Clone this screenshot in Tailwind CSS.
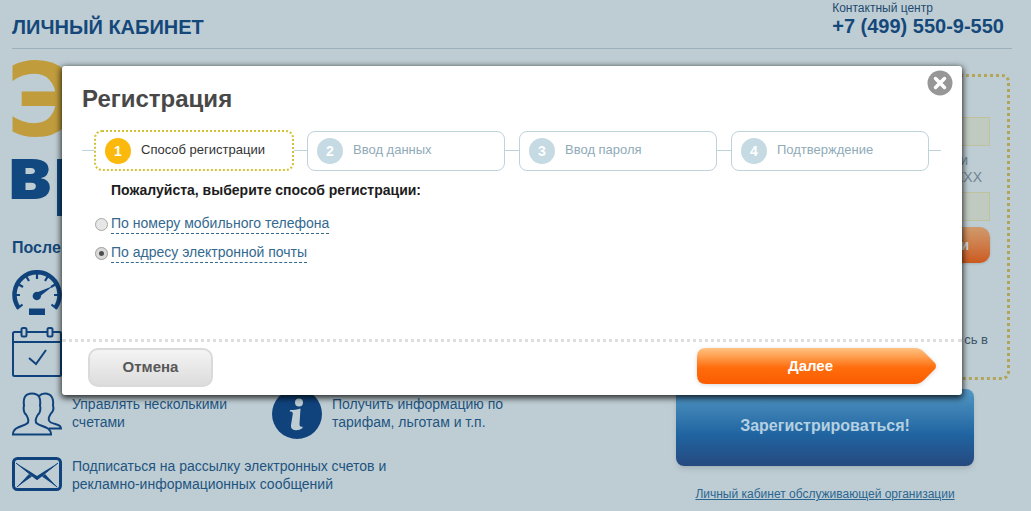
<!DOCTYPE html>
<html lang="ru">
<head>
<meta charset="utf-8">
<meta name="viewport" content="width=device-width, initial-scale=1">
<title>Личный кабинет — Регистрация</title>
<script src="https://cdn.jsdelivr.net/npm/@tailwindcss/browser@4"></script>
</head>
<body class="relative min-h-screen overflow-hidden bg-[#becdd4] font-['Liberation_Sans',Arial,sans-serif] text-sm text-[#1f5480]">

<div class="pl-3 pr-[19px]">
  <header class="flex h-12 items-start justify-between border-b border-[#9bb0bc] box-content">
    <h1 class="pt-[15px] text-xl leading-6 font-bold text-[#15487a]">ЛИЧНЫЙ КАБИНЕТ</h1>
    <div class="pr-2">
      <p class="text-xs leading-4 text-[#1f4a70]">Контактный центр</p>
      <p class="text-xl leading-5 font-bold text-[#15487a]">+7 (499) 550-9-550</p>
    </div>
  </header>

  <div class="flex justify-between">
    <main class="w-[520px]">
      <p class="-ml-[6px] h-[90px] pt-[10px] font-['DejaVu_Sans',sans-serif] text-[102px] leading-[84px] font-bold text-[#c09c3c]">Э</p>
      <p class="-ml-[5px] h-[99px] font-['Open_Sans',sans-serif] text-[72px] leading-[64px] font-extrabold text-[#10487f]">вр</p>
      <h2 class="text-base leading-5 font-bold text-[#15487a]">После</h2>

      <ul class="mt-3 grid grid-cols-2 gap-x-0">
        <li class="col-span-2 h-[57px]">
          <svg class="h-[46px] w-[50px]" viewBox="0 0 50 46" fill="none" stroke="#10437c">
            <path d="M6.500 37.500A22.500 22.500 0 1 1 43.500 37.500" stroke-width="4.500"/>
            <path d="M25 3v6M14 6l3 5M36 6l-3 5M6 14l5 3M44 14l-5 3M3 25h5M47 25h-5M5 39l5.500-4.500M45 39l-5.500-4.500" stroke-width="2.200"/>
            <path d="M41 16 29 25.500a4.200 4.200 0 1 1-3-3.500Z" fill="#10437c" stroke="none"/>
            <path d="M17 38.500h16v6.500H17z" fill="#10437c" stroke="none"/>
          </svg>
        </li>
        <li class="col-span-2 h-[65px]">
          <svg class="h-[50px] w-[50px]" viewBox="0 0 50 50" fill="none" stroke="#10437c" stroke-width="2">
            <path d="M9 5H2.500Q1 5 1 6.500V47.500Q1 49 2.500 49H47.500Q49 49 49 47.500V6.500Q49 5 47.500 5H41M15 5h20M1 15h48"/>
            <rect x="9.500" y="1" width="5" height="8.500" rx="1.500"/>
            <rect x="35.500" y="1" width="5" height="8.500" rx="1.500"/>
            <path d="m17 31 7 6L34 23"/>
          </svg>
        </li>
        <li class="flex h-[65px] gap-[10px]">
          <svg class="h-[44px] w-[50px] shrink-0" viewBox="0 0 50 44" fill="none" stroke="#10437c" stroke-width="2">
            <path d="M1 42.500c0-9 13-8 15-12 1-3 0-5-2-8-2-1-3-6-2-9C11 6 13 1.500 20 1.500S29 6 28 13.500c1 3 0 8-2 9-2 3-3 5-2 8 2 4 15 3 15 12Z"/>
            <path d="M27 4c2-2 4-2.500 6-2.500C39 1.500 42 6 41 13.500c1 3 0 6-2 8-2 3-3 4-2 7 2 5 12 2 12 8H37"/>
          </svg>
          <p class="w-[180px] pt-[3px] leading-[18px]">Управлять несколькими счетами</p>
        </li>
        <li class="flex h-[65px] gap-[10px]">
          <svg class="-mt-[3px] size-[50px] shrink-0" viewBox="0 0 50 50">
            <circle cx="25" cy="25" r="25" fill="#10437c"/>
            <circle cx="27" cy="13.500" r="4" fill="#becdd4"/>
            <path d="M18 21c4 0 7-.500 10.500-1.500L27.500 35c0 2.500 1 3 3 2.500v1.500C28 41 25 41.500 22.500 41c-3-.500-3.700-2.500-3.500-5l1.800-11c.200-2-1-2.500-3-2.500Z" fill="#becdd4"/>
          </svg>
          <p class="w-[180px] pt-[3px] leading-[18px]">Получить информацию по тарифам, льготам и т.п.</p>
        </li>
        <li class="col-span-2 flex gap-[10px]">
          <svg class="h-[34px] w-[50px] shrink-0" viewBox="0 0 50 34" fill="none" stroke="#10437c">
            <rect x="1.500" y="1.500" width="47" height="31" rx="4" stroke-width="3"/>
            <path d="M4 6l20 16q1 .8 2 0L46 6M5 30l13-11.500M45 30 32 18.500" stroke-width="1"/>
            <path d="M4 6 18 14.500 25 19 32 14.500 46 6 25.500 22.500h-1ZM5 30 17 17l3 2.500ZM45 30 33 17l-3 2.500Z" fill="#10437c" stroke="none"/>
          </svg>
          <p class="w-[340px] leading-[18px]">Подписаться на рассылку электронных счетов и рекламно-информационных сообщений</p>
        </li>
      </ul>
    </main>

    <aside class="mr-[2px] w-[334px] pt-[25px]">
      <form class="h-[306px] rounded-lg border-[3px] border-dotted border-[#b3a558] pt-[40px] pr-[17px] pl-4 text-right text-[#72848f]">
        <input aria-label="Логин" class="block h-[29px] w-full border border-[#bfc29c] bg-[#c0cac1]">
        <p class="mt-[6px] h-[40px] pr-[22px] text-sm leading-[17px]">и<br><span class="-mr-[14px]">XXX</span></p>
        <input aria-label="Пароль" type="password" class="block h-[29px] w-full border border-[#bfc29c] bg-[#c0cac1]">
        <button type="button" class="mt-[6px] ml-auto block h-9 w-28 rounded-[10px] bg-linear-to-b from-[#cf9a6c] to-[#cb5a1c] pr-[21px] text-right font-bold text-[#cfd6da] shadow-sm">Войти</button>
        <p class="mt-[68px] pr-[2px] text-[13px] leading-[18px] text-[#3c5568]">сь в</p>
      </form>
      <button type="button" class="mt-[9px] block h-[77px] w-[298px] rounded-lg bg-linear-to-b from-[#5398c4] via-[#1f64a0] via-60% to-[#25497f] pb-1 text-base font-bold text-[#b4d0e2] shadow-md">Зарегистрироваться!</button>
      <p class="mt-[17px] w-[298px] text-center"><a href="#" class="text-xs leading-[18px] text-[#2a6690] underline">Личный кабинет обслуживающей организации</a></p>
    </aside>
  </div>
</div>

<!-- Registration dialog over the page -->
<div class="absolute inset-x-0 top-[66px] pr-[69px] pl-[62px]">
  <section role="dialog" aria-labelledby="dialog-title" class="relative rounded-[3px] bg-white shadow-[0_2px_6px_1px_rgba(0,0,0,0.8)]">
    <button type="button" aria-label="Закрыть" class="absolute top-1 right-[9px] size-[26px]">
      <svg viewBox="0 0 26 26" class="size-[26px]"><circle cx="13" cy="13" r="12.500" fill="#979797"/><path d="m8.500 8.500 9 9m0-9-9 9" stroke="#fff" stroke-width="3.500" stroke-linecap="round"/></svg>
    </button>
    <h2 id="dialog-title" class="pt-[18px] pl-5 text-2xl leading-[30px] font-bold text-[#484848]">Регистрация</h2>

    <ol class="mt-4 mr-[21px] ml-5 flex items-center text-[13px] text-[#8fabb8]">
      <li aria-hidden="true" class="h-px w-3 bg-[#bfd3db]"></li>
      <li class="flex h-[41px] flex-1 items-center gap-[10px] rounded-lg border-2 border-dotted border-[#d2c236] pl-[9px] text-[#333]"><b class="grid size-[26px] place-items-center rounded-full bg-[#fbb90d] text-sm text-white">1</b>Способ регистрации</li>
      <li aria-hidden="true" class="h-px w-[13px] bg-[#bfd3db]"></li>
      <li class="flex h-10 flex-1 items-center gap-[10px] rounded-lg border border-[#bfd3db] pl-[9px]"><b class="grid size-[26px] place-items-center rounded-full bg-[#c5dae3] text-sm text-white">2</b>Ввод данных</li>
      <li aria-hidden="true" class="h-px w-[14px] bg-[#bfd3db]"></li>
      <li class="flex h-10 flex-1 items-center gap-[10px] rounded-lg border border-[#bfd3db] pl-[9px]"><b class="grid size-[26px] place-items-center rounded-full bg-[#c5dae3] text-sm text-white">3</b>Ввод пароля</li>
      <li aria-hidden="true" class="h-px w-[14px] bg-[#bfd3db]"></li>
      <li class="flex h-10 flex-1 items-center gap-[10px] rounded-lg border border-[#bfd3db] pl-[9px]"><b class="grid size-[26px] place-items-center rounded-full bg-[#c5dae3] text-sm text-white">4</b>Подтверждение</li>
      <li aria-hidden="true" class="h-px w-3 bg-[#bfd3db]"></li>
    </ol>

    <form>
      <fieldset class="h-[168px] pt-[9px] pl-[33px]">
        <legend class="float-left pl-4 text-sm leading-5 font-bold text-[#1c1c1c]">Пожалуйста, выберите способ регистрации:</legend>
        <div class="clear-both flex flex-col items-start gap-[9px] pt-[14px] text-[#34698f]">
          <label class="flex items-center gap-[3px] leading-[18px]"><input type="radio" name="method" class="size-[13px] appearance-none rounded-full border border-[#a8a8a8] bg-[#e6e6e6] checked:border-[4px] checked:border-[#d9d9d9] checked:bg-[#4c4c4c] checked:outline checked:-outline-offset-1 checked:outline-[#a3a3a3]"><span class="h-5 border-b border-dashed border-[#34698f]">По номеру мобильного телефона</span></label>
          <label class="flex items-center gap-[3px] leading-[18px]"><input type="radio" name="method" checked class="size-[13px] appearance-none rounded-full border border-[#a8a8a8] bg-[#e6e6e6] checked:border-[4px] checked:border-[#d9d9d9] checked:bg-[#4c4c4c] checked:outline checked:-outline-offset-1 checked:outline-[#a3a3a3]"><span class="h-5 border-b border-dashed border-[#34698f]">По адресу электронной почты</span></label>
        </div>
      </fieldset>
      <div class="flex items-start justify-between border-t-3 border-dotted border-[#dedede] pt-[6px] pr-[26px] pb-2 pl-[26px]">
        <button type="button" class="h-[39px] w-[125px] rounded-[10px] border-2 border-[#dadada] bg-linear-to-b from-[#f4f4f4] to-[#dcdcdc] pb-[2px] text-[15px] font-bold text-[#585858]">Отмена</button>
        <button type="submit" class="relative h-[36px] w-[239px] pr-3 text-[15px] font-bold text-white">
          <svg class="absolute inset-0 h-full w-full drop-shadow-sm" viewBox="0 0 239 36" aria-hidden="true">
            <defs><linearGradient id="orange" x2="0" y2="1"><stop stop-color="#ffc383"/><stop offset=".25" stop-color="#ff9d4d"/><stop offset=".55" stop-color="#ff6c0c"/><stop offset="1" stop-color="#fa5c00"/></linearGradient></defs>
            <path d="M9 0H218q5 0 9 4l11 11q2 3 0 6l-11 11q-4 4-9 4H9q-9 0-9-9V9q0-9 9-9Z" fill="url(#orange)"/>
          </svg>
          <span class="relative">Далее</span>
        </button>
      </div>
    </form>
  </section>
</div>
</body>
</html>
